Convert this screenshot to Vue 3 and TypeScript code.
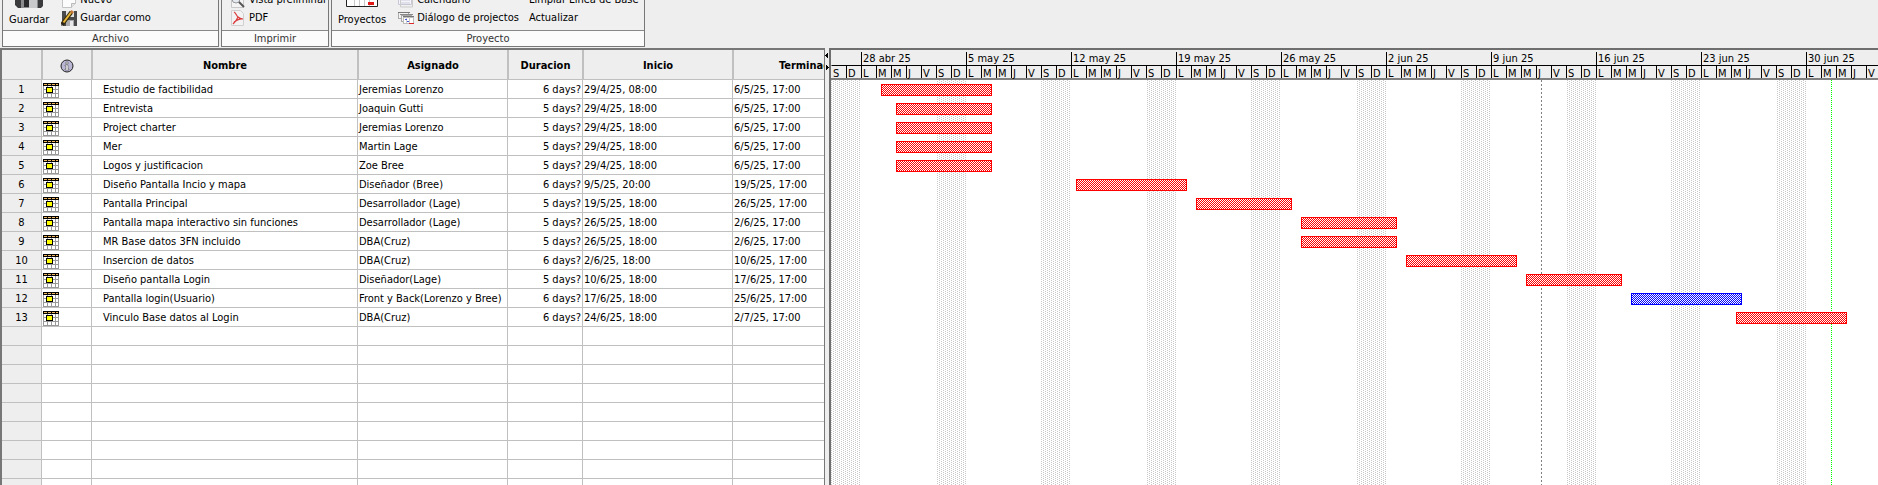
<script setup lang="ts">
interface Task {
  name: string
  owner: string
  days: number
  start: string
  end: string
  from: [number, number]
  to: [number, number]
  critical: boolean
}

const DAY = 15
const ROW = 19

/* from/to hold [month, day] of the first and last working day */
const tasks: Task[] = [
  { name: 'Estudio de factibilidad', owner: 'Jeremias Lorenzo', days: 6, start: '29/4/25, 08:00', end: '6/5/25, 17:00', from: [4, 29], to: [5, 6], critical: true },
  { name: 'Entrevista', owner: 'Joaquin Gutti', days: 5, start: '29/4/25, 18:00', end: '6/5/25, 17:00', from: [4, 30], to: [5, 6], critical: true },
  { name: 'Project charter', owner: 'Jeremias Lorenzo', days: 5, start: '29/4/25, 18:00', end: '6/5/25, 17:00', from: [4, 30], to: [5, 6], critical: true },
  { name: 'Mer', owner: 'Martin Lage', days: 5, start: '29/4/25, 18:00', end: '6/5/25, 17:00', from: [4, 30], to: [5, 6], critical: true },
  { name: 'Logos y justificacion', owner: 'Zoe Bree', days: 5, start: '29/4/25, 18:00', end: '6/5/25, 17:00', from: [4, 30], to: [5, 6], critical: true },
  { name: 'Diseño Pantalla Incio y mapa', owner: 'Diseñador (Bree)', days: 6, start: '9/5/25, 20:00', end: '19/5/25, 17:00', from: [5, 12], to: [5, 19], critical: true },
  { name: 'Pantalla Principal', owner: 'Desarrollador (Lage)', days: 5, start: '19/5/25, 18:00', end: '26/5/25, 17:00', from: [5, 20], to: [5, 26], critical: true },
  { name: 'Pantalla mapa interactivo sin funciones', owner: 'Desarrollador (Lage)', days: 5, start: '26/5/25, 18:00', end: '2/6/25, 17:00', from: [5, 27], to: [6, 2], critical: true },
  { name: 'MR Base datos 3FN incluido', owner: 'DBA(Cruz)', days: 5, start: '26/5/25, 18:00', end: '2/6/25, 17:00', from: [5, 27], to: [6, 2], critical: true },
  { name: 'Insercion de datos', owner: 'DBA(Cruz)', days: 6, start: '2/6/25, 18:00', end: '10/6/25, 17:00', from: [6, 3], to: [6, 10], critical: true },
  { name: 'Diseño pantalla Login', owner: 'Diseñador(Lage)', days: 5, start: '10/6/25, 18:00', end: '17/6/25, 17:00', from: [6, 11], to: [6, 17], critical: true },
  { name: 'Pantalla login(Usuario)', owner: 'Front y Back(Lorenzo y Bree)', days: 6, start: '17/6/25, 18:00', end: '25/6/25, 17:00', from: [6, 18], to: [6, 25], critical: false },
  { name: 'Vinculo Base datos al Login', owner: 'DBA(Cruz)', days: 6, start: '24/6/25, 18:00', end: '2/7/25, 17:00', from: [6, 25], to: [7, 2], critical: true },
]

const origin = Date.UTC(2025, 3, 26)
const dayX = (d: [number, number]) => ((Date.UTC(2025, d[0] - 1, d[1]) - origin) / 86400000) * DAY

const bars = tasks.map((t, i) => {
  const x = dayX(t.from) + 5
  return { x, y: i * ROW + 4, w: dayX(t.to) + 11 - x, critical: t.critical }
})

const weekLabels = ['28 abr 25', '5 may 25', '12 may 25', '19 may 25', '26 may 25', '2 jun 25', '9 jun 25', '16 jun 25', '23 jun 25', '30 jun 25']
const weeks = [
  { label: '', days: ['S', 'D'] },
  ...weekLabels.map((label) => ({ label, days: ['L', 'M', 'M', 'J', 'V', 'S', 'D'] })),
]
const weekends = weeks.map((_, i) => i * 7 * DAY)
const todayX = dayX([6, 12]) + 5
const statusX = dayX([7, 1]) + 10
const emptyRows = 10
</script>

<template>
  <div class="app">
    <header class="ribbon">
      <section class="group archivo">
        <div class="body">
          <button class="big">
            <svg width="30" height="30" viewBox="0 0 30 30">
              <path d="M1 1h28v27l-2 2H4l-3-3z" fill="#3b3b3d" />
              <path d="M6 1h18v14H6z" fill="#ddd" />
              <path d="M7 19h17v11H7z" fill="#8b8b8d" />
              <path d="M15 19h8v11h-8z" fill="#c9c9cb" />
              <path d="M10 21h5v8h-5z" fill="#2a2a2c" />
            </svg>
            <span>Guardar</span>
          </button>
          <div class="stack">
            <button class="small">
              <svg width="16" height="16" viewBox="0 0 16 16">
                <path d="M1.500 .5h13v11l-4 4h-9z" fill="#fcfcfc" stroke="#c4c4c4" />
                <path d="M10.500 15.500v-4h4" fill="#e4e4e4" stroke="#bbb" />
              </svg>
              <span>Nuevo</span>
            </button>
            <button class="small">
              <svg width="16" height="16" viewBox="0 0 16 16">
                <path d="M1 1h15v15H2l-1-1z" fill="#4a4a4c" />
                <path d="M5 1h8v6H5z" fill="#e2e2e4" />
                <path d="M5 10h8v6H5z" fill="#a9a9ab" />
                <path d="M9 11h3v5H9z" fill="#e8e8ea" />
                <path d="M1 14.500 10.500 2" stroke="#3a2a08" stroke-width="4" />
                <path d="M2.500 12.500 10 2.500" stroke="#e8b73a" stroke-width="2" />
                <path d="M0 16l1-4 2 2z" fill="#222" />
                <path d="M9 2l1.500-2L13 2l-1.500 2z" fill="#c8783c" />
              </svg>
              <span>Guardar como</span>
            </button>
          </div>
        </div>
        <div class="caption">Archivo</div>
      </section>

      <section class="group imprimir">
        <div class="body">
          <div class="stack">
            <button class="small">
              <svg width="16" height="16" viewBox="0 0 16 16">
                <path d="M1.500 .5h12v15h-12z" fill="#f4f4f4" stroke="#c8c8c8" />
                <circle cx="6" cy="7" r="4" fill="#e4eaf0" stroke="#999" />
                <path d="M9 10l5 5" stroke="#555" stroke-width="2" />
              </svg>
              <span>Vista preliminar</span>
            </button>
            <button class="small">
              <svg width="16" height="16" viewBox="0 0 16 16">
                <path d="M1.500 .5h9l3 3v12h-12z" fill="#f3f3f3" stroke="#d0d0d0" />
                <path d="M4 2c2 1 2 3 4 5s4 2 5 2M8 7c-1 3-3 5-5 7M13 9c-3-1-6 1-9 3" fill="none" stroke="#dc3c3c" stroke-width="1.200" />
              </svg>
              <span>PDF</span>
            </button>
          </div>
        </div>
        <div class="caption">Imprimir</div>
      </section>

      <section class="group proyecto">
        <div class="body">
          <button class="big">
            <svg width="32" height="30" viewBox="0 0 32 30">
              <path d="M.5 .5h31v28H.5z" fill="#fff" stroke="#222" />
              <path d="M8.500 1v27M13.500 1v27M18.500 1v27M23.500 1v27M1 20.500h30" stroke="#c9c9c9" />
              <path d="M1 1h30v5H1z" fill="#555" />
              <path d="M22 24h6v3h-6z" fill="#e01818" />
            </svg>
            <span>Proyectos</span>
          </button>
          <div class="stack">
            <button class="small">
              <svg width="16" height="16" viewBox="0 0 16 16">
                <path d="M.5 .5h13v12H.5z" fill="#f4f4fa" stroke="#c8c8d4" />
                <path d="M2.500 5v10h12V3" fill="none" stroke="#ccc" />
                <path d="M3 8h9M3 11h9" stroke="#ccccdc" />
              </svg>
              <span>Calendario</span>
            </button>
            <button class="small">
              <svg width="16" height="16" viewBox="0 0 16 16" shape-rendering="crispEdges">
                <path d="M.5 2.500h10v6H.5z" fill="#f4f4f4" stroke="#aaa" />
                <path d="M0 2.500h12" stroke="#777" />
                <path d="M3.500 5.500h10v6h-10z" fill="#f4f4f4" stroke="#aaa" />
                <path d="M2 4.500h13" stroke="#888" />
                <path d="M5.500 7.500h10v6h-10z" fill="#fff" stroke="#bbb" />
                <path d="M5 6.500h11" stroke="#777" />
                <path d="M8.500 7v6M11.500 7v6" stroke="#ccc" />
                <path d="M7 9.500h2M9 11.500h2" stroke="#4a5ad8" />
                <path d="M11 13.500h5" stroke="#e02828" />
              </svg>
              <span>Diálogo de projectos</span>
            </button>
          </div>
          <div class="stack plain">
            <button class="small"><span>Limpiar Línea de Base</span></button>
            <button class="small"><span>Actualizar</span></button>
          </div>
        </div>
        <div class="caption">Proyecto</div>
      </section>
    </header>

    <main class="workspace">
      <div class="sheet">
        <table>
          <colgroup>
            <col class="c-num" /><col class="c-info" /><col class="c-name" /><col class="c-owner" />
            <col class="c-days" /><col class="c-date" /><col class="c-date" />
          </colgroup>
          <thead>
            <tr>
              <th></th>
              <th>
                <svg class="info" width="14" height="14" viewBox="0 0 14 14" role="img" aria-label="Indicadores">
                  <circle cx="7" cy="7" r="6" fill="#b9b6d4" stroke="#222" />
                  <path d="M6 3h2v2H6zM5 6h3v4h1v1H5v-1h1V7H5z" fill="#fff" stroke="#555" stroke-width=".6" />
                </svg>
              </th>
              <th>Nombre</th>
              <th>Asignado</th>
              <th>Duracion</th>
              <th>Inicio</th>
              <th>Terminado</th>
            </tr>
          </thead>
          <tbody>
            <tr v-for="(t, i) in tasks" :key="i">
              <td class="num">{{ i + 1 }}</td>
              <td>
                <svg class="cal" width="16" height="15" viewBox="0 0 16 15" shape-rendering="crispEdges">
                  <path d="M0 0h16v15H0z" fill="#999" />
                  <path d="M1 3h3v3H1zM5 3h3v3H5zM9 3h3v3H9zM13 3h2v3h-2zM1 7h3v3H1zM5 7h3v3H5zM9 7h3v3H9zM13 7h2v3h-2zM1 11h3v3H1zM5 11h3v3H5zM9 11h3v3H9zM13 11h2v3h-2z" fill="#fff" />
                  <path d="M0 0h16v3H0z" fill="#000" />
                  <path d="M1 1h3v1H1zM5 1h3v1H5zM9 1h3v1H9zM13 1h2v1h-2z" fill="#f0b860" />
                  <path d="M3 4h7v6H3z" fill="#000" />
                  <path d="M4 5h5v4H4z" fill="#ff0" />
                </svg>
              </td>
              <td class="name">{{ t.name }}</td>
              <td>{{ t.owner }}</td>
              <td class="days">{{ t.days }} days?</td>
              <td>{{ t.start }}</td>
              <td>{{ t.end }}</td>
            </tr>
            <tr v-for="n in emptyRows" :key="'e' + n">
              <td class="num"></td>
              <td v-for="c in 6" :key="c"></td>
            </tr>
          </tbody>
        </table>
      </div>

      <div class="splitter">
        <svg width="4" height="22" viewBox="0 0 4 22" shape-rendering="crispEdges">
          <path d="M3 0v5h-1v-1H1V3H0V2h1V1h1V0z" />
          <path d="M1 12v5h1v-1h1v-1h1v-1H3v-1H2v-1z" />
        </svg>
      </div>

      <div class="gantt">
        <div class="scale">
          <div v-for="(w, i) in weeks" :key="i" class="week">
            <div class="label">{{ w.label }}</div>
            <div class="week-days">
              <span v-for="(d, j) in w.days" :key="j">{{ d }}</span>
            </div>
          </div>
        </div>
        <svg class="chart" width="100%" height="100%" shape-rendering="crispEdges">
          <defs>
            <pattern id="off" width="4" height="2" patternUnits="userSpaceOnUse">
              <path d="M0 0h1v1H0zM2 1h1v1H2z" fill="#c8c8c8" />
            </pattern>
            <pattern id="red" width="2" height="2" patternUnits="userSpaceOnUse">
              <path d="M0 0h2v2H0z" fill="#fff" />
              <path d="M0 0h1v1H0zM1 1h1v1H1z" fill="#f00" />
            </pattern>
            <pattern id="blue" width="2" height="2" patternUnits="userSpaceOnUse">
              <path d="M0 0h2v2H0z" fill="#fff" />
              <path d="M0 0h1v1H0zM1 1h1v1H1z" fill="#00f" />
            </pattern>
          </defs>
          <rect v-for="x in weekends" :key="x" :x="x" y="0" width="30" height="100%" fill="url(#off)" />
          <line :x1="todayX + 0.5" :x2="todayX + 0.5" y1="0" y2="100%" stroke="#808080" stroke-dasharray="2 2" />
          <line :x1="statusX + 0.5" :x2="statusX + 0.5" y1="0" y2="100%" stroke="#0f0" stroke-dasharray="1 1" />
          <g v-for="(b, i) in bars" :key="i">
            <rect :x="b.x" :y="b.y" :width="b.w" height="12" :fill="b.critical ? '#f00' : '#00f'" />
            <rect :x="b.x + 1" :y="b.y + 1" :width="b.w - 2" height="10" :fill="b.critical ? 'url(#red)' : 'url(#blue)'" />
          </g>
        </svg>
      </div>
    </main>
  </div>
</template>

<style>
body {
  margin: 0;
}
</style>

<style scoped>
.app {
  display: flex;
  flex-direction: column;
  height: 100vh;
  overflow: hidden;
  background: #eee;
  color: #000;
  font: 11px/14px "DejaVu Sans Condensed", "DejaVu Sans", sans-serif;
}

svg {
  display: block;
  flex: none;
}

.ribbon {
  display: flex;
  flex: none;
  align-items: flex-end;
  gap: 2px;
  height: 48px;
  padding: 0 2px 1px;
  box-sizing: border-box;
  overflow: hidden;
}

.group {
  box-sizing: border-box;
  border: 1px solid #777;
  border-top: 0;
  background: #f0f0f0;
}

.archivo {
  width: 217px;
}

.imprimir {
  width: 108px;
}

.proyecto {
  width: 314px;
}

.body {
  display: flex;
  align-items: flex-end;
  padding: 0 6px 3px;
}

.imprimir .body {
  padding-left: 8px;
}

.caption {
  height: 15px;
  border-top: 1px solid #888;
  background: #fbfbfb;
  color: #333;
  line-height: 15px;
  text-align: center;
}

button {
  padding: 0;
  border: 0;
  background: none;
  color: inherit;
  font: inherit;
  white-space: nowrap;
}

.big {
  display: flex;
  flex-direction: column;
  align-items: center;
  gap: 5px;
}

.stack {
  display: flex;
  flex-direction: column;
  margin-left: 12px;
}

.imprimir .stack {
  margin-left: 0;
}

.proyecto .plain {
  margin-left: 10px;
}

.small {
  display: flex;
  align-items: center;
  gap: 3px;
  height: 18px;
}

.workspace {
  display: grid;
  flex: 1;
  grid-template-columns: minmax(0, 825fr) 4px minmax(0, 1049fr);
  min-height: 0;
}

.sheet {
  overflow: hidden;
  border: solid #777;
  border-width: 2px 1px 0 2px;
  background: #fff;
}

table {
  width: 881px;
  border-collapse: separate;
  border-spacing: 0;
  table-layout: fixed;
}

.c-num {
  width: 40px;
}

.c-info {
  width: 50px;
}

.c-name {
  width: 266px;
}

.c-owner,
.c-date {
  width: 150px;
}

.c-days {
  width: 75px;
}

th {
  box-sizing: border-box;
  height: 30px;
  padding: 2px 0 0;
  border: solid #c0c0c0;
  border-width: 0 1px 1px;
  background: #eee;
  font-weight: bold;
}

th:first-child {
  border-left: 0;
}

.info {
  margin: 0 auto;
}

td {
  box-sizing: border-box;
  height: 19px;
  padding: 2px 1px 0;
  border: solid #c0c0c0;
  border-width: 0 1px 1px 0;
  white-space: nowrap;
}

td.num {
  background: #eee;
  text-align: center;
}

td.name {
  padding-left: 11px;
}

td.days {
  text-align: right;
}

.splitter {
  padding-top: 5px;
}

.gantt {
  display: flex;
  flex-direction: column;
  overflow: hidden;
  border: solid #6e6e6e;
  border-width: 2px 0 0 2px;
  background: #fff;
}

.scale {
  display: flex;
  flex: none;
  height: 30px;
  padding-top: 2px;
  box-sizing: border-box;
  border-bottom: 2px solid #808080;
  background: #eee;
}

.week {
  flex: none;
}

.label {
  height: 13px;
  padding-left: 1px;
  border-bottom: 1px solid #000;
  border-left: 1px solid #000;
  line-height: 14px;
}

.week-days {
  display: flex;
  height: 12px;
}

.week-days span {
  box-sizing: border-box;
  width: 15px;
  padding-left: 1px;
  border-left: 1px solid #000;
  line-height: 16px;
}

.week:first-child .label,
.week:first-child span:first-child {
  border-left-color: transparent;
}

.chart {
  flex: 1;
  min-height: 0;
}
</style>
